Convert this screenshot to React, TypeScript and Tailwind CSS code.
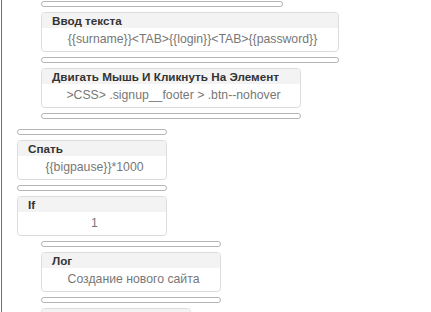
const font = { fontFamily: '"Liberation Sans", Arial, sans-serif' };

type Step =
  | { kind: "sep"; x: number; w: number; extra?: boolean }
  | { kind: "card"; x: number; w: number; title: string; value: string };

const steps: Step[] = [
  { kind: "sep", x: 41, w: 242 },
  { kind: "card", x: 41, w: 298, title: "Ввод текста", value: "{{surname}}<TAB>{{login}}<TAB>{{password}}" },
  { kind: "sep", x: 41, w: 298 },
  { kind: "card", x: 41, w: 260, title: "Двигать Мышь И Кликнуть На Элемент", value: ">CSS> .signup__footer > .btn--nohover" },
  { kind: "sep", x: 41, w: 260 },
  { kind: "sep", x: 17, w: 150, extra: true },
  { kind: "card", x: 17, w: 150, title: "Спать", value: "{{bigpause}}*1000" },
  { kind: "sep", x: 17, w: 150 },
  { kind: "card", x: 17, w: 150, title: "If", value: "1" },
  { kind: "sep", x: 41, w: 180 },
  { kind: "card", x: 41, w: 180, title: "Лог", value: "Создание нового сайта" },
  { kind: "sep", x: 41, w: 180 },
  { kind: "card", x: 41, w: 150, title: "", value: "" },
];

function Separator({ x, w, extra }: { x: number; w: number; extra?: boolean }) {
  return (
    <div
      className={`h-[6px] shrink-0 rounded-full border border-[#b4b4b4] bg-white ${extra ? "mt-[5px]" : ""}`}
      style={{ marginLeft: x - 2, width: w }}
    />
  );
}

function Card({ x, w, title, value }: { x: number; w: number; title: string; value: string }) {
  return (
    <div
      className="h-[40px] shrink-0 overflow-hidden rounded-[4px] border border-[#dcdcdc] bg-white"
      style={{ marginLeft: x - 2, width: w }}
    >
      <div className="h-[15px] bg-[#f3f3f3] pl-[10px] text-[11.7px] font-bold leading-[15px] text-[#333]">
        {title}
      </div>
      <div className="h-[23px] whitespace-nowrap pl-[5px] text-center text-[12.25px] leading-[23px] text-[#777]">
        {value}
      </div>
    </div>
  );
}

export default function App() {
  return (
    <div className="h-[312px] w-[431px] overflow-hidden bg-white" style={font}>
      <div className="ml-[1px] h-full border-l border-[#3a7cc2]">
        <div className="flex flex-col gap-[5px] pt-[1px]">
          {steps.map((s, i) =>
            s.kind === "sep" ? (
              <Separator key={i} x={s.x} w={s.w} extra={s.extra} />
            ) : (
              <Card key={i} x={s.x} w={s.w} title={s.title} value={s.value} />
            )
          )}
        </div>
      </div>
    </div>
  );
}
